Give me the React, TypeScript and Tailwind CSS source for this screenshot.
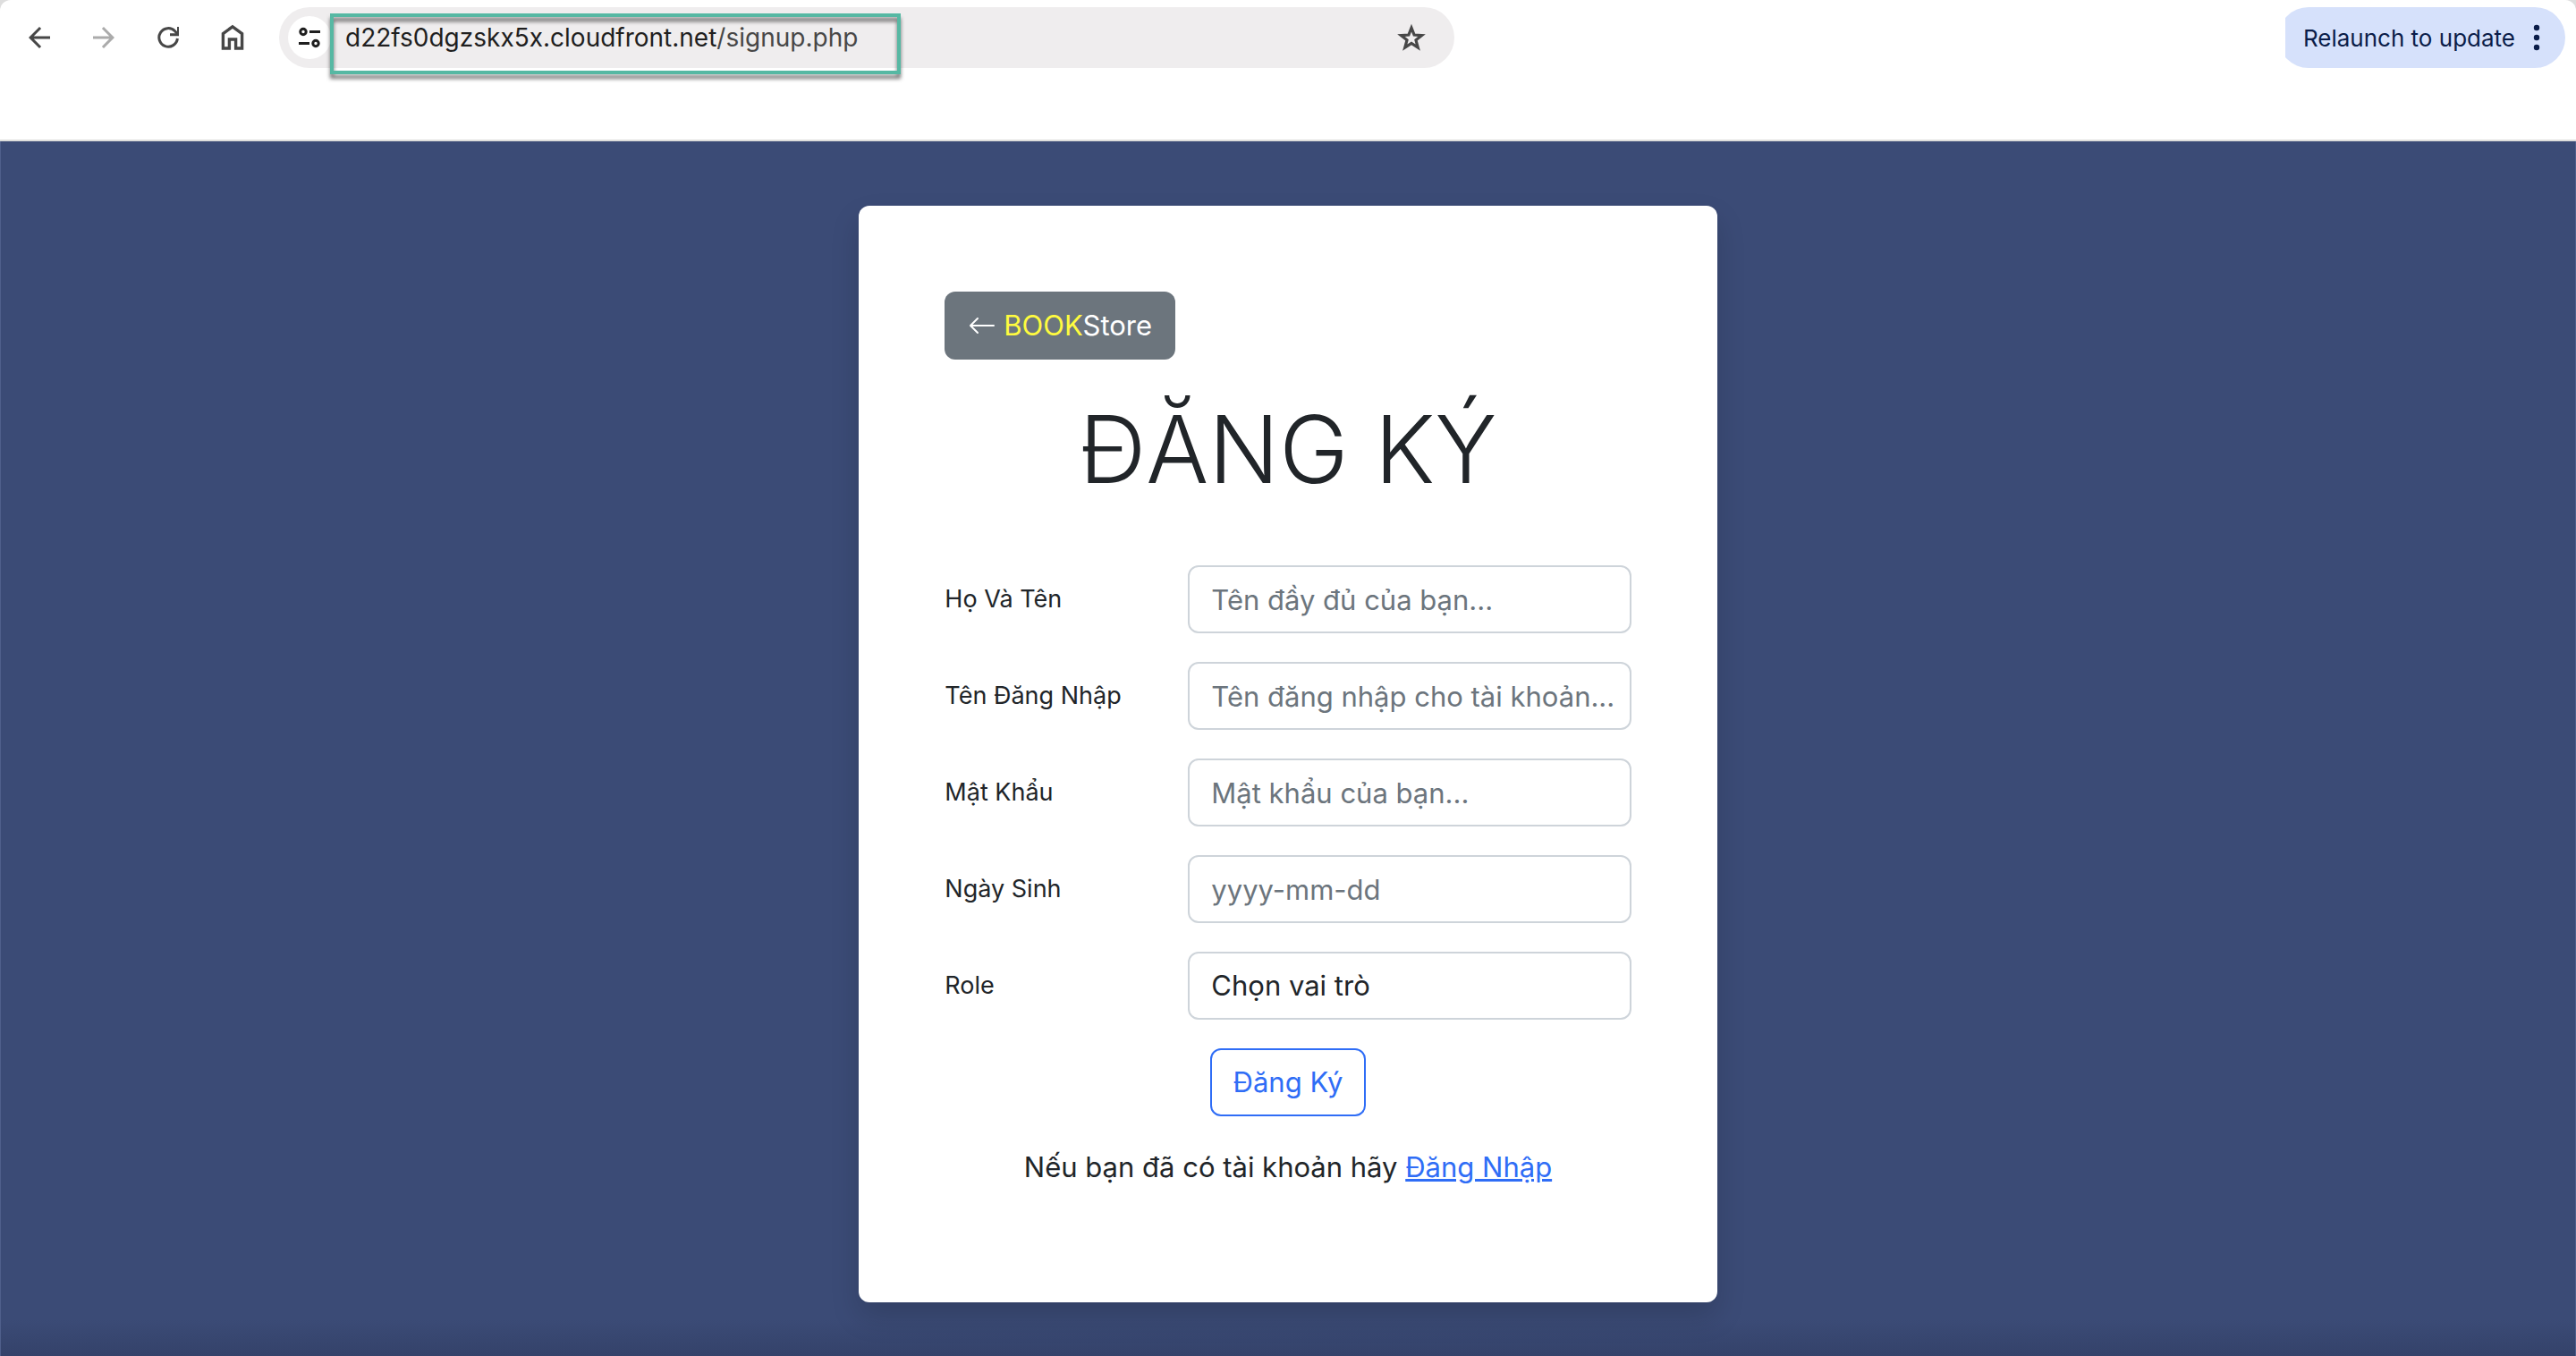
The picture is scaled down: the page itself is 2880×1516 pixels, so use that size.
import React from "react";
import { BsArrowLeft } from "react-icons/bs";
import { MdArrowBack, MdArrowForward } from "react-icons/md";

function ReloadIcon() {
  return (
    <svg className="size-6" viewBox="0 0 24 24" fill="none" stroke="currentColor" strokeWidth="3">
      <path d="M22.4 13A10.3 10.3 0 1 1 19.6 4.8L23 8.6" />
      <path d="M23.5 0V8.7H14" />
    </svg>
  );
}

function HomeIcon() {
  return (
    <svg className="h-[30px] w-[26px]" viewBox="0 0 26 30" fill="none" stroke="currentColor" strokeWidth="3.4">
      <path d="M2.4 27V10.6L13 2.8l10.6 7.8V27h-7V17H9.4V27Z" />
    </svg>
  );
}

function SiteSettingsIcon() {
  return (
    <svg className="size-6" viewBox="0 0 24 24" fill="none" stroke="currentColor" strokeWidth="3">
      <circle cx="5" cy="5.5" r="3.2" />
      <path d="M12 5.5H24M0 18.5H12" />
      <circle cx="19" cy="18.5" r="3.2" />
    </svg>
  );
}

function StarIcon() {
  return (
    <svg className="size-8" viewBox="0 0 34 32" fill="none" stroke="currentColor" strokeWidth="3.4">
      <path d="M17 4.5l3.3 8.4 9 .5-7 5.6 2.4 8.8-7.7-5-7.7 5 2.4-8.8-7-5.6 9-.5Z" />
    </svg>
  );
}

function DotsIcon() {
  return (
    <svg className="h-8 w-2" viewBox="0 0 8 32" fill="currentColor">
      <circle cx="4" cy="5" r="3.2" />
      <circle cx="4" cy="16" r="3.2" />
      <circle cx="4" cy="27" r="3.2" />
    </svg>
  );
}

function BrowserBar() {
  return (
    <header className="h-[158px] rounded-t-xl border-b-2 border-[#dededc] bg-white px-3 pt-2 text-[#474747]">
      <div className="flex h-[68px] items-center">
        <nav className="flex items-center" aria-label="Browser">
          <button aria-label="Back" className="flex w-16 justify-center">
            <MdArrowBack className="size-9" />
          </button>
          <button aria-label="Forward" className="ml-2 flex w-16 justify-center text-[#ababab]">
            <MdArrowForward className="size-9" />
          </button>
          <button aria-label="Reload" className="ml-2 flex w-16 justify-center">
            <ReloadIcon />
          </button>
          <button aria-label="Home" className="ml-2 flex w-16 justify-center">
            <HomeIcon />
          </button>
        </nav>
        <div className="relative ml-5 flex h-full w-[46%] items-center rounded-full bg-[#efedee] pr-8 pl-[10px]">
          <button
            aria-label="Site information"
            className="flex size-12 shrink-0 items-center justify-center rounded-full bg-white text-[#1f1f1f]"
          >
            <SiteSettingsIcon />
          </button>
          <p className="ml-4 flex-1 text-[28px] leading-9 text-[#1f1f1f]">
            d22fs0dgzskx5x.cloudfront.net<span className="text-[#474747]">/signup.php</span>
          </p>
          <button aria-label="Bookmark this page">
            <StarIcon />
          </button>
          <div className="pointer-events-none absolute top-[7px] left-[57px] h-[68px] w-[638px] border-4 border-[#56b8a3] drop-shadow-[0_5px_2px_rgba(0,0,0,0.55)]" />
        </div>
        <div className="ml-auto h-full overflow-hidden">
          <button className="-ml-2 flex h-full items-center gap-5 rounded-full bg-[#d6e1fb] pr-7 pl-7 text-[26px] text-[#0b1d49]">
            Relaunch to update
            <DotsIcon />
          </button>
        </div>
      </div>
    </header>
  );
}

const control =
  "h-[76px] w-full appearance-none rounded-xl border-2 border-[#ced4da] bg-white pr-3 pl-6 text-[31px] text-[#212529] placeholder:text-[#6c757d] placeholder:opacity-100";

const fields = [
  { id: "name", label: "Họ Và Tên", type: "text", placeholder: "Tên đầy đủ của bạn..." },
  { id: "username", label: "Tên Đăng Nhập", type: "text", placeholder: "Tên đăng nhập cho tài khoản..." },
  { id: "password", label: "Mật Khẩu", type: "password", placeholder: "Mật khẩu của bạn..." },
  { id: "birthday", label: "Ngày Sinh", type: "text", placeholder: "yyyy-mm-dd" },
];

function Row({ id, label, children }: { id: string; label: string; children: React.ReactNode }) {
  return (
    <div className="flex items-center">
      <label htmlFor={id} className="w-[272px] shrink-0 text-[27px]">
        {label}
      </label>
      {children}
    </div>
  );
}

function SignupCard() {
  return (
    <section className="w-1/3 rounded-xl bg-white px-24 pt-24 pb-[126px] text-[#212529] shadow-[0_16px_32px_rgba(0,0,0,0.15)]">
      <a
        href="#"
        className="inline-flex h-[76px] items-center gap-2 rounded-xl bg-[#6c757d] px-[26px] text-[31px] text-white"
      >
        <BsArrowLeft className="size-8" />
        <span>
          <span className="text-[#fffb3f]">BOOK</span>Store
        </span>
      </a>
      <h1 className="mt-8 text-center text-[104px] leading-[136px] font-light">ĐĂNG KÝ</h1>
      <form className="mt-[62px] flex flex-col gap-8" onSubmit={(e) => e.preventDefault()}>
        {fields.map((f) => (
          <Row key={f.id} id={f.id} label={f.label}>
            <input id={f.id} type={f.type} placeholder={f.placeholder} className={control} />
          </Row>
        ))}
        <Row id="role" label="Role">
          <select id="role" className={control}>
            <option>Chọn vai trò</option>
          </select>
        </Row>
        <button className="h-[76px] self-center rounded-xl border-2 border-[#2f6df6] px-6 text-[31px] text-[#2f6df6]">
          Đăng Ký
        </button>
        <p className="text-center text-[31px] leading-[50px]">
          Nếu bạn đã có tài khoản hãy{" "}
          <a href="#" className="text-[#2f6df6] underline">
            Đăng Nhập
          </a>
        </p>
      </form>
    </section>
  );
}

export default function App() {
  return (
    <div className="flex min-h-screen flex-col bg-[#dedede] font-['Inter',sans-serif]">
      <BrowserBar />
      <main className="flex flex-1 items-start justify-center border-x border-[#4f5f8b] bg-[#3b4b76] bg-linear-to-t from-[#34426a] to-[#3b4b76] to-3% pt-[72px] pb-[60px]">
        <SignupCard />
      </main>
    </div>
  );
}
